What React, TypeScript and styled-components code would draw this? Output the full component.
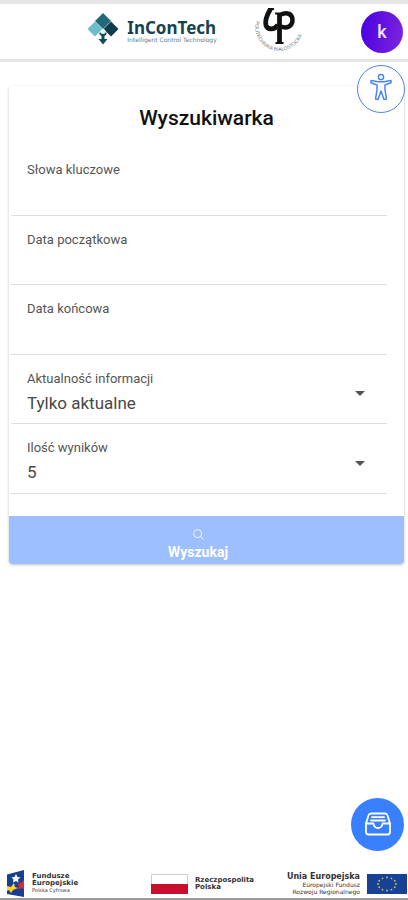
import React from "react";
import styled, { createGlobalStyle } from "styled-components";
import { IoSearchOutline } from "react-icons/io5";

const GlobalStyle = createGlobalStyle`
  *, *::before, *::after { box-sizing: border-box; }
  body {
    margin: 0;
    background: #fff;
    color: #111;
    font-family: Roboto, "Liberation Sans", sans-serif;
  }
`;

const Page = styled.div`
  display: flex;
  flex-direction: column;
  min-height: 100vh;
`;

const Header = styled.header`
  display: flex;
  align-items: center;
  height: 62px;
  padding-right: 5px;
  border-top: 4px solid #e6e6e6;
  border-bottom: 3px solid #e6e6e6;
`;

const Logos = styled.div`
  flex: 1;
  display: flex;
  align-items: flex-start;
  justify-content: center;
  gap: 35px;
  padding-left: 32px;
`;

const Brand = styled.a`
  display: flex;
  align-items: flex-start;
  gap: 8px;
  padding-top: 6px;
  color: #174350;
  text-decoration: none;
`;

const BrandText = styled.span`
  display: flex;
  flex-direction: column;
  padding-top: 7px;
`;

const BrandName = styled.span`
  font: 700 17px/16px "Noto Sans", sans-serif;
`;

const BrandTagline = styled.span`
  font: 400 6px/7px "DejaVu Sans", sans-serif;
  color: #5b7f8a;
  white-space: nowrap;
`;

const Avatar = styled.button`
  width: 42px;
  height: 42px;
  padding: 0;
  border: 0;
  border-radius: 50%;
  background: linear-gradient(100deg, #4700e2, #8125dc);
  color: #f3e8ff;
  font: 500 18px/42px Roboto, sans-serif;
`;

const RoundButton = styled.button<{ $filled?: boolean }>`
  position: fixed;
  right: ${(p) => (p.$filled ? 4 : 3)}px;
  ${(p) => (p.$filled ? "bottom: 49px;" : "top: 65px;")}
  display: flex;
  align-items: center;
  justify-content: center;
  width: ${(p) => (p.$filled ? 53 : 48)}px;
  height: ${(p) => (p.$filled ? 53 : 48)}px;
  padding: 0 0 ${(p) => (p.$filled ? 2 : 4)}px;
  border: ${(p) => (p.$filled ? "0" : "1px solid #4c84ee")};
  border-radius: 50%;
  background: ${(p) => (p.$filled ? "#3880ff" : "#fff")};
  color: ${(p) => (p.$filled ? "#fff" : "#4a86f2")};
`;

const Main = styled.main`
  flex: 1;
  padding: 24px 4px 24px 9px;
`;

const Card = styled.form`
  display: flex;
  flex-direction: column;
  overflow: hidden;
  border-radius: 4px;
  background: #fff;
  box-shadow: 0 1px 3px rgba(0, 0, 0, 0.24);
`;

const Title = styled.h1`
  margin: 0;
  padding-top: 20px;
  height: 60px;
  text-align: center;
  font-size: 21px;
  line-height: 24px;
  font-weight: 500;
`;

const Fields = styled.div`
  display: grid;
  grid-auto-rows: 1fr;
  min-height: 348px;
  margin: 0 17px 22px 2px;
`;

const Field = styled.div`
  display: flex;
  flex-direction: column;
  padding: 16px 16px 0;
  border-bottom: 1px solid #dedede;
`;

const Label = styled.label`
  font-size: 13px;
  line-height: 16px;
  color: #555;
`;

const Input = styled.input`
  width: 100%;
  height: 32px;
  padding: 0;
  border: 0;
  outline: 0;
  background: transparent;
  color: #444;
  font: 400 17px/32px Roboto, sans-serif;
`;

const SelectRow = styled.div`
  display: flex;
  align-items: center;
  height: 32px;
  color: #555;
`;

const Select = styled.select`
  flex: 1;
  height: 32px;
  padding: 0;
  border: 0;
  outline: 0;
  appearance: none;
  background: transparent;
  color: #484848;
  font: 400 17px/32px Roboto, sans-serif;
`;

const Caret = styled.svg`
  width: 10px;
  height: 5px;
  margin: 0 6px 18px 0;
`;

const Submit = styled.button`
  display: flex;
  flex-direction: column;
  align-items: center;
  gap: 3px;
  height: 48px;
  padding: 12px 17px 0 0;
  border: 0;
  background: #9dbeff;
  color: #fff;
  font: 700 14px/16px Roboto, sans-serif;
  svg { display: block; flex: none; font-size: 13px; }
`;

const Footer = styled.footer`
  display: flex;
  justify-content: space-between;
  align-items: center;
  height: 31px;
  padding: 0 1px 0 6px;
  border-bottom: 2px solid #9a9a9a;
`;

const Partner = styled.div<{ $shifted?: boolean }>`
  display: flex;
  align-items: center;
  gap: 7px;
  padding-left: ${(p) => (p.$shifted ? 40 : 0)}px;
`;

const PartnerText = styled.div<{ $right?: boolean }>`
  text-align: ${(p) => (p.$right ? "right" : "left")};
  font-family: "DejaVu Sans", sans-serif;
  color: #333;
  white-space: nowrap;
`;

const Strong = styled.div<{ $large?: boolean }>`
  font-size: ${(p) => (p.$large ? 8 : 7)}px;
  line-height: ${(p) => (p.$large ? 9 : 7)}px;
  font-weight: 700;
`;

const Fine = styled.div<{ $large?: boolean }>`
  font-size: ${(p) => (p.$large ? 6 : 5)}px;
  line-height: 7px;
`;

const Seal = styled.svg`
  overflow: visible;
`;

const InConTechMark = () => (
  <svg width="32" height="32" viewBox="0 0 32 32" aria-hidden="true">
    <path d="M16 0l8 8-8 8-8-8z" fill="#216878" />
    <path d="M8 8.500l7.500 7.500L8 23.500.500 16z" fill="#6cbccb" />
    <path d="M24 8.500l7.500 7.500-7.500 7.500L16.500 16z" fill="#0d3b49" />
    <path d="M12.500 19.500h7v2l-2 1.500v3h3L16 31.500 11.500 26h3v-3l-2-1.500z" fill="#164b59" />
    <circle cx="16" cy="18.500" r="2.500" fill="#e5f2f5" />
  </svg>
);

const UniversityMark = () => (
  <Seal width="54" height="50" viewBox="0 0 54 50" role="img" aria-label="Politechnika Białostocka">
    <defs>
      <path id="ring" d="M4 14A24 24 0 1 0 50.500 14L49 8" />
    </defs>
    <g fill="none" stroke="#111">
      <path d="M18.500 2C15.500 7 12.500 13 14 18.500c1.500 4.500 8.500 4.500 12-.5" strokeWidth="4.800" />
      <path d="M27.500 6v30" strokeWidth="4.800" />
      <path d="M29 7.500c6-3 11.500-.5 11.500 5.500s-5.500 9-11.500 6.500" strokeWidth="4.500" />
      <path d="M16 2h6M23 6.500h5M23.500 36h8" strokeWidth="1.800" />
    </g>
    <text fontFamily="Liberation Sans, sans-serif" fontSize="5" fill="#777">
      <textPath href="#ring">POLITECHNIKA BIAŁOSTOCKA</textPath>
    </text>
  </Seal>
);

const PersonIcon = () => (
  <svg
    width="24"
    height="28"
    viewBox="0 0 24 28"
    fill="none"
    stroke="currentColor"
    strokeWidth="1.500"
    strokeLinejoin="round"
    aria-hidden="true"
  >
    <circle cx="12" cy="4" r="2.600" />
    <path d="M2 7.500l7 1.300h6l7-1.300v2.300l-6 2.200v5l1.500 9-2.500.5-3-8.500-3 8.500-2.500-.5L8 17v-5L2 9.800z" />
  </svg>
);

const TrayIcon = () => (
  <svg
    width="26"
    height="24"
    viewBox="0 0 26 24"
    fill="none"
    stroke="currentColor"
    strokeWidth="1.800"
    strokeLinejoin="round"
    strokeLinecap="round"
    aria-hidden="true"
  >
    <path d="M1 11.500l2.500-8Q4 1.500 6 1.500h14q2 0 2.500 2l2.500 8V20q0 2.500-2.500 2.500h-19Q1 22.500 1 20z" />
    <path d="M1 11.500h7.500q.5 4.500 4.500 4.500t4.500-4.500H25M7 5.200h12M6 8.500h14" />
  </svg>
);

const FundsMark = () => (
  <svg width="19" height="27" viewBox="0 0 19 27" aria-hidden="true">
    <path d="M1 4.500L18 0v27L1 24z" fill="#173f91" />
    <path d="M10 4l1.500 3 3 .5-2.500 2 .5 3L10 11l-3 1.500.5-3-2-2 3-.5z" fill="#fff" />
    <path d="M1 16l4 1 3-4 1 4 3 1-5 2-2 3-2-3-2 1z" fill="#ffd12e" />
    <path d="M18 10v9l-3-1-3 2 1-4-2-3 3 .5z" fill="#e02836" />
  </svg>
);

const PolishFlag = () => (
  <svg width="37" height="20" viewBox="0 0 37 20" aria-hidden="true">
    <path d="M.5.500h36v19H.5z" fill="#fff" stroke="#ccc" />
    <path d="M0 10h37v10H0z" fill="#c8102e" />
  </svg>
);

const EuFlag = () => (
  <svg width="40" height="20" viewBox="0 0 40 20" aria-hidden="true">
    <path d="M0 0h40v20H0z" fill="#164194" />
    {Array.from({ length: 12 }, (_, i) => {
      const a = (i * Math.PI) / 6;
      return (
        <circle key={i} cx={20 + 9 * Math.cos(a)} cy={10 + 6.5 * Math.sin(a)} r="0.9" fill="#c9bf62" />
      );
    })}
  </svg>
);

const textFields = [
  { id: "keywords", label: "Słowa kluczowe" },
  { id: "date-from", label: "Data początkowa" },
  { id: "date-to", label: "Data końcowa" },
];

const selectFields = [
  { id: "validity", label: "Aktualność informacji", options: ["Tylko aktualne"] },
  { id: "count", label: "Ilość wyników", options: ["5"] },
];

export default function App() {
  return (
    <Page>
      <GlobalStyle />
      <Header>
        <Logos>
          <Brand href="#">
            <InConTechMark />
            <BrandText>
              <BrandName>InConTech</BrandName>
              <BrandTagline>Intelligent Control Technology</BrandTagline>
            </BrandText>
          </Brand>
          <UniversityMark />
        </Logos>
        <Avatar type="button">k</Avatar>
      </Header>

      <Main>
        <Card onSubmit={(e) => e.preventDefault()}>
          <Title>Wyszukiwarka</Title>
          <Fields>
            {textFields.map((f) => (
              <Field key={f.id}>
                <Label htmlFor={f.id}>{f.label}</Label>
                <Input id={f.id} type="text" />
              </Field>
            ))}
            {selectFields.map((f) => (
              <Field key={f.id}>
                <Label htmlFor={f.id}>{f.label}</Label>
                <SelectRow>
                  <Select id={f.id}>
                    {f.options.map((o) => (
                      <option key={o}>{o}</option>
                    ))}
                  </Select>
                  <Caret viewBox="0 0 10 5" aria-hidden="true">
                    <path d="M0 0h10L5 5z" fill="currentColor" />
                  </Caret>
                </SelectRow>
              </Field>
            ))}
          </Fields>
          <Submit type="submit">
            <IoSearchOutline />
            Wyszukaj
          </Submit>
        </Card>
      </Main>

      <Footer>
        <Partner>
          <FundsMark />
          <PartnerText>
            <Strong>Fundusze</Strong>
            <Strong>Europejskie</Strong>
            <Fine>Polska Cyfrowa</Fine>
          </PartnerText>
        </Partner>
        <Partner $shifted>
          <PolishFlag />
          <PartnerText>
            <Strong>Rzeczpospolita</Strong>
            <Strong>Polska</Strong>
          </PartnerText>
        </Partner>
        <Partner>
          <PartnerText $right>
            <Strong $large>Unia Europejska</Strong>
            <Fine $large>Europejski Fundusz</Fine>
            <Fine $large>Rozwoju Regionalnego</Fine>
          </PartnerText>
          <EuFlag />
        </Partner>
      </Footer>

      <RoundButton type="button" aria-label="Dostępność">
        <PersonIcon />
      </RoundButton>
      <RoundButton type="button" $filled aria-label="Skrzynka">
        <TrayIcon />
      </RoundButton>
    </Page>
  );
}
